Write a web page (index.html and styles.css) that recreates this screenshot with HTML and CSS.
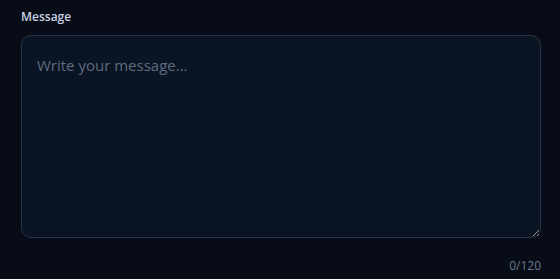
FILE: index.html
```html
<!DOCTYPE html>
<html lang="en">
<head>
  <meta charset="UTF-8" />
  <title>Message</title>
  <link rel="stylesheet" href="styles.css">
</head>
<body>
  <div class="field">
    <label class="field-label" for="message">Message</label>
    <textarea id="message" class="field-input" maxlength="120" placeholder="Write your message..."></textarea>
    <div class="field-count" id="count">0/120</div>
  </div>

  <script>
    const box = document.getElementById("message");
    box.addEventListener("input", () => {
      document.getElementById("count").innerText = box.value.length + "/120";
    });
  </script>
</body>
</html>
```

FILE: styles.css
```css
body {
  font-family: 'Open Sans', 'Noto Sans', sans-serif;
  background: #070c17;
  margin: 0;
  padding: 8px 19px 0 21px;
  color: #cbd5e1;
}

.field {
  display: flex;
  flex-direction: column;
}

.field-label {
  font-size: 12px;
  font-weight: 600;
  line-height: 17px;
  color: #c8d3e3;
  margin-bottom: 10px;
}

.field-input {
  box-sizing: border-box;
  height: 203px;
  padding: 19px 15px;
  font-family: inherit;
  font-size: 15px;
  color: #e2e8f0;
  background: #0b1423;
  border: 1px solid #27354a;
  border-radius: 10px;
  outline: none;
  resize: vertical;
}

.field-input::placeholder {
  color: #5d6b80;
}

.field-count {
  align-self: flex-end;
  margin-top: 19px;
  font-size: 12px;
  color: #6b7a90;
}
```
